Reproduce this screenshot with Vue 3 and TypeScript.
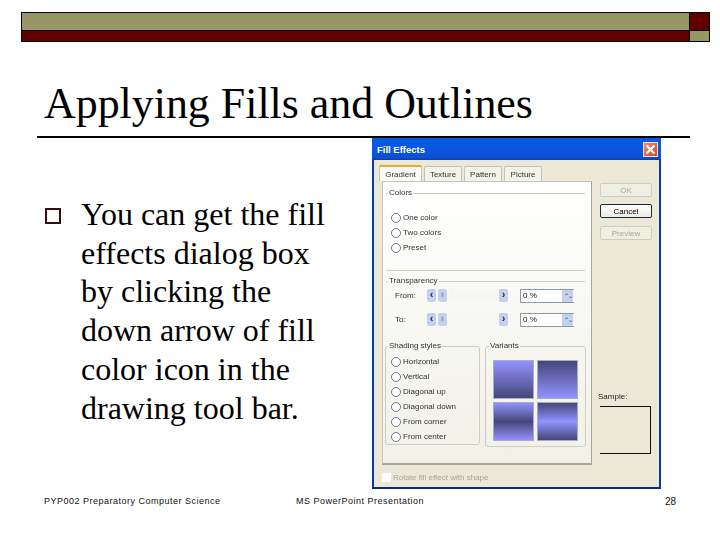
<script setup lang="ts">
const tabs = [
  { label: 'Gradient', active: true },
  { label: 'Texture', active: false },
  { label: 'Pattern', active: false },
  { label: 'Picture', active: false },
]
const colors = ['One color', 'Two colors', 'Preset']
const shading = ['Horizontal', 'Vertical', 'Diagonal up', 'Diagonal down', 'From corner', 'From center']
const transparency = [
  { label: 'From:', value: '0 %' },
  { label: 'To:', value: '0 %' },
]
const variants = ['v-a', 'v-b', 'v-c', 'v-d']
const buttons = [
  { label: 'OK', primary: false },
  { label: 'Cancel', primary: true },
  { label: 'Preview', primary: false },
]
const lines = ['You can get the fill', 'effects dialog box', 'by clicking the', 'down arrow of fill', 'color icon in the', 'drawing tool bar.']
</script>

<template>
  <div class="slide">
    <div class="topbar">
      <div class="olive"></div>
      <div class="red"></div>
      <div class="red"></div>
      <div class="olive"></div>
    </div>
    <h1 class="title">Applying Fills and Outlines</h1>
    <div class="rule"></div>
    <div class="main">
      <div class="bullet-row">
        <span class="bullet"></span>
        <p class="body-text"><span v-for="l in lines" :key="l" class="line">{{ l }}</span></p>
      </div>
      <div class="dialog">
        <div class="titlebar">
          <span class="caption">Fill Effects</span>
          <span class="close">
            <svg viewBox="0 0 15 15" width="15" height="15">
              <path d="M3.5 3.5 L11.5 11.5 M11.5 3.5 L3.5 11.5" stroke="#fff" stroke-width="2.2" fill="none" />
            </svg>
          </span>
        </div>
        <div class="client">
          <div class="left">
            <div class="tabs">
              <span v-for="t in tabs" :key="t.label" class="tab" :class="{ active: t.active }">{{ t.label }}</span>
            </div>
            <div class="panel">
              <fieldset class="group colors">
                <legend>Colors</legend>
                <label v-for="c in colors" :key="c" class="radio"><i class="dot"></i>{{ c }}</label>
              </fieldset>
              <fieldset class="group transparency">
                <legend>Transparency</legend>
                <div v-for="t in transparency" :key="t.label" class="slider-row">
                  <span class="slider-label">{{ t.label }}</span>
                  <span class="arrow">‹</span>
                  <span class="thumb">⦀</span>
                  <span class="track"></span>
                  <span class="arrow">›</span>
                  <span class="spin"><span class="spin-value">{{ t.value }}</span><span class="spin-btn">⌃⌄</span></span>
                </div>
              </fieldset>
              <div class="lower">
                <fieldset class="group shading">
                  <legend>Shading styles</legend>
                  <label v-for="s in shading" :key="s" class="radio"><i class="dot"></i>{{ s }}</label>
                </fieldset>
                <fieldset class="group variants">
                  <legend>Variants</legend>
                  <div class="swatches">
                    <span v-for="v in variants" :key="v" class="swatch" :class="v"></span>
                  </div>
                </fieldset>
              </div>
            </div>
            <label class="check"><i class="box"></i>Rotate fill effect with shape</label>
          </div>
          <div class="right">
            <span v-for="b in buttons" :key="b.label" class="btn" :class="{ primary: b.primary }">{{ b.label }}</span>
            <span class="sample-label">Sample:</span>
            <div class="sample"></div>
          </div>
        </div>
      </div>
    </div>
    <div class="footer">
      <span class="foot-left">PYP002 Preparatory Computer Science</span>
      <span class="foot-mid">MS PowerPoint Presentation</span>
      <span class="foot-num">28</span>
    </div>
  </div>
</template>

<style>
html, body { margin: 0; background: #fff; }
</style>

<style scoped>
.slide {
  width: 720px;
  height: 540px;
  box-sizing: border-box;
  padding-top: 12px;
  background: #fff;
  overflow: hidden;
  display: flex;
  flex-direction: column;
  font-family: "Liberation Serif", serif;
  color: #000;
}
.topbar {
  margin: 0 10px 0 21px;
  height: 30px;
  box-sizing: border-box;
  display: grid;
  grid-template-columns: 1fr 19px;
  grid-template-rows: 17px 10px;
  gap: 1px;
  padding: 1px;
  background: #000;
}
.olive { background: #969667; }
.red { background: #600000; }
.title {
  margin: 36px 0 0 44px;
  font-size: 43.9px;
  line-height: 50px;
  height: 50px;
  font-weight: 400;
  color: #000;
}
.rule {
  margin: 8px 30px 0 37px;
  height: 2px;
  background: #000;
}
.main {
  flex: 1;
  display: flex;
  justify-content: space-between;
  min-height: 0;
  padding: 0 59px 0 45px;
}
.bullet-row {
  display: flex;
  align-items: flex-start;
  padding-top: 57px;
}
.bullet {
  width: 12px;
  height: 12px;
  margin: 13px 20px 0 0;
  border: 2.5px solid #3a0a12;
  flex: none;
}
.body-text {
  margin: 0;
  font-size: 32px;
  line-height: 38.7px;
}
.line { display: block; white-space: nowrap; }
.dialog {
  width: 289px;
  height: 351px;
  box-sizing: border-box;
  border: 2px solid #0a3aa8;
  border-top: none;
  border-bottom-color: #0c2a78;
  background: #ebe8d8;
  display: flex;
  flex-direction: column;
  font-family: "Liberation Sans", sans-serif;
  font-size: 8px;
  color: #333;
}
.titlebar {
  height: 22px;
  margin: 0 -2px;
  flex: none;
  padding: 0 3px 0 5px;
  display: flex;
  align-items: center;
  justify-content: space-between;
  background: linear-gradient(#0a5ae0, #0a58e6 40%, #0c4fd0 90%, #0a3fb0);
}
.caption { color: #fff; font-weight: 700; font-size: 9.5px; }
.close {
  width: 15px;
  height: 15px;
  display: flex;
  background: linear-gradient(135deg, #e89078, #d04a20);
  border: 1px solid #f0e0d8;
  box-sizing: border-box;
  overflow: hidden;
}
.close svg { margin: -1px; flex: none; }
.client { flex: 1; display: flex; min-height: 0; padding-left: 8px; filter: blur(0.35px); }
.left { width: 210px; display: flex; flex-direction: column; }
.tabs { display: flex; gap: 2px; height: 16px; padding: 5px 0 0 0; align-items: flex-end; margin-left: -3px; }
.tab {
  width: 38px;
  height: 15px;
  line-height: 15px;
  text-align: center;
  background: #f4f3ea;
  border: 1px solid #c4c2b0;
  border-bottom: none;
  border-radius: 2px 2px 0 0;
  box-sizing: border-box;
}
.tab.active {
  width: 43px;
  height: 16px;
  background: #fbfbf8;
  border-top: 2px solid #e8a830;
}
.panel {
  width: 210px;
  height: 284px;
  box-sizing: border-box;
  background: linear-gradient(#ffffff, #f1f0e8);
  border: 1px solid #c8c6b4;
  border-right: 1px solid #a8a698;
  border-bottom: 2px solid #a8a698;
  padding: 6px 5px 0 2px;
}
.group {
  margin: 0;
  padding: 0;
  border: 1px solid #d0cebe;
  border-radius: 3px;
  box-sizing: border-box;
  min-width: 0;
}
.group legend { padding: 0 1px; margin-left: -3px; line-height: 10px; }
.colors { height: 83px; padding: 12px 0 0 5px; border-left-color: transparent; border-right-color: transparent; }
.transparency { height: 61px; margin-top: 5px; padding: 2px 0 0 5px; border-left-color: transparent; border-right-color: transparent; border-bottom-color: transparent; }
.radio { display: flex; align-items: center; height: 15px; gap: 2px; white-space: nowrap; }
.dot {
  width: 10px;
  height: 10px;
  border: 1px solid #6a7a8a;
  border-radius: 50%;
  background: #fff;
  box-sizing: border-box;
  flex: none;
}
.slider-row { display: flex; align-items: center; height: 15px; margin-bottom: 9px; }
.slider-label { width: 36px; padding-left: 4px; box-sizing: border-box; }
.arrow, .thumb {
  width: 9px;
  height: 13px;
  line-height: 11px;
  text-align: center;
  background: #c4d0f0;
  color: #1a2a50;
  font-size: 11px;
  font-weight: 700;
  border-radius: 2px;
  flex: none;
}
.thumb { margin: 0 2px; font-size: 6px; font-weight: 400; color: #7080a8; line-height: 13px; }
.track { width: 50px; height: 13px; background: #f6f6f2; flex: none; }
.spin {
  margin-left: 12px;
  width: 54px;
  height: 14px;
  box-sizing: border-box;
  background: #fff;
  border: 1px solid #8a9aa8;
  border-right: none;
  display: flex;
  justify-content: space-between;
  flex: none;
  color: #111;
}
.spin-value { padding-left: 2px; line-height: 12px; }
.spin-btn {
  width: 11px;
  background: #c4d0f0;
  color: #1a2a50;
  font-size: 6px;
  line-height: 12px;
  text-align: center;
  margin-right: 1px;
  letter-spacing: -1px;
  overflow: hidden;
}
.lower { display: flex; gap: 5px; margin-top: 4px; }
.shading { width: 95px; height: 104px; padding: 3px 0 0 5px; }
.variants { width: 101px; height: 106px; padding: 9px 0 0 7px; }
.variants legend { margin-left: -4px; }
.swatches {
  display: grid;
  grid-template-columns: 41px 41px;
  grid-template-rows: 39px 39px;
  gap: 3px;
}
.swatch { border: 1px solid #a4aec4; box-sizing: border-box; }
.v-a { background: linear-gradient(#9292ff, #46467a); }
.v-b { background: linear-gradient(#46467a, #9292ff); }
.v-c { background: linear-gradient(#9292ff, #46467a 50%, #9292ff); }
.v-d { background: linear-gradient(#46467a, #9292ff 50%, #46467a); }
.check { display: flex; align-items: center; gap: 2px; margin-top: 7px; height: 10px; color: #a8a698; white-space: nowrap; }
.box { width: 9px; height: 9px; background: #fff; flex: none; }
.right {
  flex: 1;
  display: flex;
  flex-direction: column;
  padding: 23px 0 0 8px;
}
.btn {
  width: 52px;
  height: 14px;
  line-height: 13px;
  text-align: center;
  box-sizing: border-box;
  border: 1px solid #cfcdbc;
  border-radius: 2px;
  background: #efeee2;
  color: #a8a698;
  margin-bottom: 7.3px;
}
.btn.primary {
  border-color: #1a2a40;
  background: linear-gradient(#fff, #ecebe0);
  color: #000;
}
.sample-label { margin: 145.5px 0 0 -2px; height: 10px; line-height: 10px; color: #222; }
.sample {
  margin-top: 4px;
  width: 51px;
  height: 48px;
  box-sizing: border-box;
  border: 1px solid #111;
  border-left: none;
}
.footer {
  height: 51px;
  margin-top: 0;
  flex: none;
  padding: 7px 44px 0 44px;
  box-sizing: border-box;
  display: flex;
  font-family: "Liberation Sans", sans-serif;
  font-size: 9px;
  letter-spacing: 0.5px;
  color: #111;
}
.foot-left { width: 252px; }
.foot-mid { flex: 1; }
.foot-num { letter-spacing: 0; font-size: 10px; }
</style>
